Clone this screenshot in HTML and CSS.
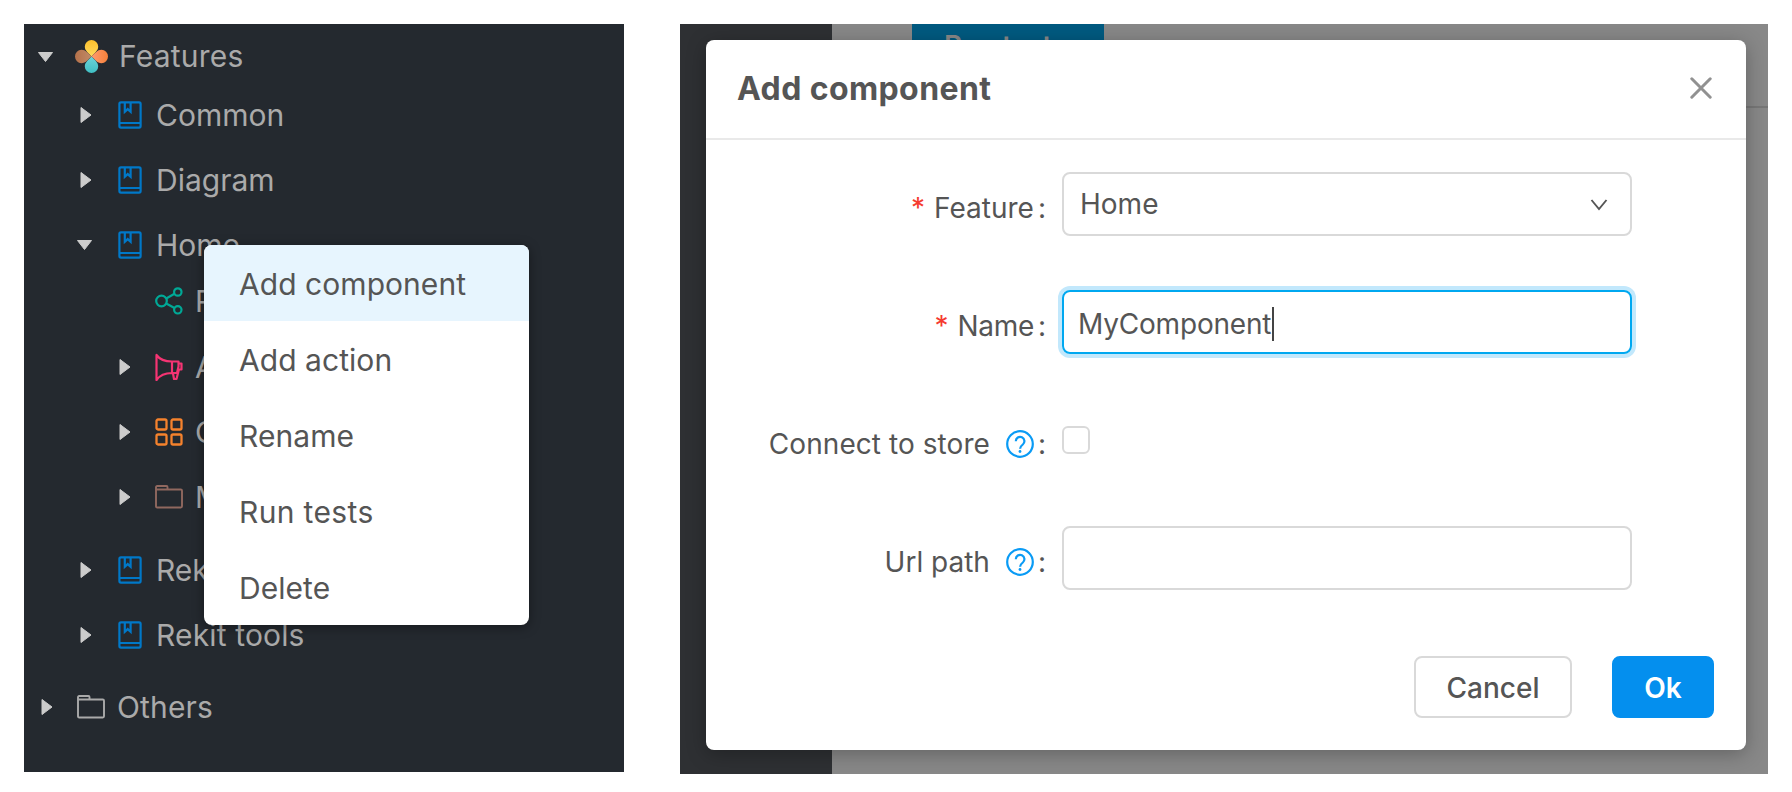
FILE: index.html
```
<!DOCTYPE html>
<html lang="en">
<head>
<meta charset="utf-8">
<title>Add component</title>
<link rel="stylesheet" href="styles.css">
</head>
<body>
<svg class="defs" aria-hidden="true">
  <symbol id="book" viewBox="0 0 24 28">
    <g fill="none" stroke="currentColor" stroke-width="2.2">
      <rect x="1.400" y="1.400" width="21.200" height="25.200" rx="1.500"/>
      <path d="M1.500 22h21M6.800 1.500v9.300l2.900-2.700 2.900 2.700V1.500"/>
    </g>
  </symbol>
  <symbol id="folder" viewBox="0 0 28 24">
    <path d="M1 4.500V2.200Q1 1 2.200 1h9.300q1 0 1 1v2.500M1 4.500h24.700q1.300 0 1.300 1.300v15.500q0 1.200-1.200 1.200H2.200Q1 22.500 1 21.300z" fill="none" stroke="currentColor" stroke-width="1.900"/>
  </symbol>
  <symbol id="right" viewBox="0 0 12 18"><path d="M1 1.500v15L11 9z" fill="#ccc" stroke="#ccc" stroke-linejoin="round"/></symbol>
  <symbol id="down" viewBox="0 0 18 12"><path d="M1.500 1.500h14L8.500 10.500z" fill="#ccc" stroke="#ccc" stroke-linejoin="round"/></symbol>
  <symbol id="help" viewBox="0 0 28 28">
    <g fill="none" stroke="#0a9bf5" stroke-width="2.200">
      <circle cx="14" cy="14" r="12.800"/>
      <path d="M9.800 11.200a4.300 4.300 0 1 1 7 3.300c-1.700 1.300-2.700 2.100-2.700 4.300"/>
    </g>
    <circle cx="14" cy="21.500" r="1.400" fill="#0a9bf5"/>
  </symbol>
</svg>
<main class="page">
  <section class="sidebar">
    <div class="row root"><svg class="down"><use href="#down"/></svg>
      <svg class="logo" viewBox="0 0 32 32">
        <defs>
          <linearGradient id="g1" x1="0" y1="0" x2="0" y2="1"><stop offset="0" stop-color="#fbc02d"/><stop offset="1" stop-color="#ffd95c"/></linearGradient>
          <linearGradient id="g2"><stop offset="0" stop-color="#ff9a6e"/><stop offset="1" stop-color="#f5813a"/></linearGradient>
          <linearGradient id="g3" x1="0" y1="0" x2="0" y2="1"><stop offset="0" stop-color="#6fd3d8"/><stop offset="1" stop-color="#3fbfc4"/></linearGradient>
          <linearGradient id="g4"><stop offset="0" stop-color="#b5714a"/><stop offset="1" stop-color="#c08a68"/></linearGradient>
        </defs>
        <path d="M16 16C13 12.500 9.500 10.500 9.500 6.300a6.500 6.300 0 0 1 13 0c0 4.200-3.500 6.200-6.500 9.700z" fill="url(#g1)"/>
        <path d="M16 16c3.500-3 5.500-6.500 9.700-6.500a6.300 6.500 0 0 1 0 13c-4.200 0-6.200-3.500-9.700-6.500z" fill="url(#g2)"/>
        <path d="M16 16c3 3.500 6.500 5.500 6.500 9.700a6.500 6.300 0 0 1-13 0c0-4.200 3.500-6.200 6.500-9.700z" fill="url(#g3)"/>
        <path d="M16 16c-3.500 3-5.500 6.500-9.700 6.500a6.300 6.500 0 0 1 0-13c4.200 0 6.200 3.500 9.700 6.500z" fill="url(#g4)"/>
      </svg><span class="t features">Features</span></div>
    <div class="row l1"><svg class="right"><use href="#right"/></svg><svg class="book"><use href="#book"/></svg><span class="t">Common</span></div>
    <div class="row l1"><svg class="right"><use href="#right"/></svg><svg class="book"><use href="#book"/></svg><span class="t">Diagram</span></div>
    <div class="row l1 open"><svg class="down"><use href="#down"/></svg><svg class="book"><use href="#book"/></svg><span class="t">Home</span></div>
    <div class="row l2 leaf"><svg class="ico teal" viewBox="0 0 28 28"><g fill="none" stroke="currentColor" stroke-width="2.200"><circle cx="6.500" cy="14" r="5.300"/><circle cx="22.800" cy="5" r="3.700"/><circle cx="22.800" cy="22.800" r="3.700"/><path d="M11.200 11.500l8.300-4.700M11.200 16.500l8.300 4.500"/></g></svg><span class="t">Routes</span></div>
    <div class="row l2"><svg class="right"><use href="#right"/></svg><svg class="ico pink" viewBox="0 0 28 28"><path d="M1.500 2v25C5 22 10.500 20 17 20V8.500C10.500 8.500 5 7 1.500 2zM17 8.500h6.500v5L22 20h-5M23.500 10.500h3v6h-3.200M18 20.500l1 5.500h2.500l2.300-9" fill="none" stroke="currentColor" stroke-width="2.200" stroke-linejoin="round"/></svg><span class="t">Actions</span></div>
    <div class="row l2"><svg class="right"><use href="#right"/></svg><svg class="ico orange" viewBox="0 0 28 28"><g fill="none" stroke="currentColor" stroke-width="2.300"><rect x="1.500" y="1.500" width="10" height="10" rx="1.500"/><rect x="16.500" y="1.500" width="10" height="10" rx="1.500"/><rect x="1.500" y="16.500" width="10" height="10" rx="1.500"/><rect x="16.500" y="16.500" width="10" height="10" rx="1.500"/></g></svg><span class="t">Components</span></div>
    <div class="row l2"><svg class="right"><use href="#right"/></svg><svg class="folder brown"><use href="#folder"/></svg><span class="t">Misc</span></div>
    <div class="row l1 after"><svg class="right"><use href="#right"/></svg><svg class="book"><use href="#book"/></svg><span class="t">Rekit core</span></div>
    <div class="row l1"><svg class="right"><use href="#right"/></svg><svg class="book"><use href="#book"/></svg><span class="t tools">Rekit tools</span></div>
    <div class="row others"><svg class="right"><use href="#right"/></svg><svg class="folder grey"><use href="#folder"/></svg><span class="t tools">Others</span></div>
    <ul class="menu">
      <li class="active"><span>Add component</span></li>
      <li><span>Add action</span></li>
      <li><span>Rename</span></li>
      <li><span class="run">Run tests</span></li>
      <li><span>Delete</span></li>
    </ul>
  </section>
  <section class="stage">
    <div class="strip"></div>
    <div class="behind"><div class="tab">Run tests</div></div>
    <div class="modal">
      <header><h1>Add component</h1>
        <svg class="close" viewBox="0 0 22 22"><path d="M1.800 1.800l18.400 18.400M20.200 1.800L1.800 20.200" stroke="#919191" stroke-width="3" stroke-linecap="round"/></svg></header>
      <form>
        <div class="field"><label><i>*</i><span class="lt">Feature</span><b>:</b></label>
          <div class="input select"><span>Home</span><svg viewBox="0 0 18 12"><path d="M1.500 1l7.500 9 7.500-9" fill="none" stroke="#555" stroke-width="1.900"/></svg></div></div>
        <div class="field"><label><i>*</i><span class="lt name">Name</span><b>:</b></label>
          <div class="input focus"><span>MyComponent</span><em></em></div></div>
        <div class="field"><label><span class="lt connect">Connect to store</span><svg><use href="#help"/></svg><b>:</b></label>
          <div class="check"></div></div>
        <div class="field"><label><span class="lt">Url path</span><svg><use href="#help"/></svg><b>:</b></label>
          <div class="input"></div></div>
      </form>
      <footer><div class="btn">Cancel</div><div class="btn ok">Ok</div></footer>
    </div>
  </section>
</main>
</body>
</html>
```
FILE: styles.css
```
* { box-sizing: border-box; }
body { margin: 0; background: #fff; font-family: Inter, sans-serif; color: #555; }
.defs { position: absolute; width: 0; height: 0; }
svg { display: block; flex: none; }
.page { display: flex; gap: 56px; width: 1792px; height: 792px; padding: 24px; overflow: hidden; }
.sidebar { position: relative; width: 600px; height: 748px; background: #24292f; overflow: hidden; font-size: 30px; color: #aaa; }
.row { display: flex; align-items: center; height: 65px; white-space: nowrap; }
.root { height: 58px; padding: 6px 0 0 13px; }
.root .down { margin-top: 2px; }
.root .logo { width: 33px; height: 33px; margin: 0 11px 0 20px; }
.features { letter-spacing: .2px; }
.l1 { padding-left: 56px; }
.down { width: 18px; height: 12px; }
.right { width: 12px; height: 18px; }
.l1 .book { width: 24px; height: 28px; margin: 0 14px 0 26px; color: #0078c8; }
.l1.open { padding-left: 52px; }
.l1.open .book { margin-left: 24px; }
.l2 { padding-left: 95px; }
.l2 .ico, .l2 .folder { margin: 0 12px 0 24px; }
.l2.leaf { height: 48px; margin-bottom: 9px; }
.l2.leaf .ico { margin-left: 36px; }
.ico { width: 28px; height: 28px; }
.folder { width: 28px; height: 24px; }
.teal { color: #00a896; }
.pink { color: #f53473; }
.orange { color: #f5822d; }
.brown { color: #90685f; }
.grey { color: #aaa; }
.tools { letter-spacing: .15px; }
.l1.after { margin-top: 8px; }
.others { padding-left: 17px; margin-top: 7px; }
.others .folder { margin: 0 12px 0 24px; }
.menu { position: absolute; left: 180px; top: 221px; width: 325px; height: 380px; margin: 0; padding: 0; list-style: none; background: #fff; border-radius: 8px; overflow: hidden; color: #555; box-shadow: 0 2px 12px rgba(0,0,0,.4); }
.menu li { height: 76px; padding: 1px 0 0 35px; display: flex; align-items: center; letter-spacing: .05px; }
.menu .run { letter-spacing: .35px; }
.menu .active { background: #e7f5fe; }
.stage { position: relative; display: flex; width: 1088px; height: 750px; background: #888; overflow: hidden; }
.strip { width: 152px; background: #2e3033; }
.behind { flex: 1; height: 84px; border-bottom: 2px solid #777; padding-left: 80px; }
.tab { width: 192px; height: 60px; padding: 5px 0 0 32px; background: #005a80; color: #888; font-size: 28px; font-weight: 600; line-height: 34px; letter-spacing: -.4px; }
.modal { position: absolute; left: 26px; top: 16px; width: 1040px; height: 710px; background: #fff; border-radius: 8px; box-shadow: 0 4px 20px rgba(0,0,0,.28); }
header { display: flex; justify-content: space-between; align-items: center; height: 100px; padding: 0 34px 2px 31px; border-bottom: 2px solid #e9e9e9; }
h1 { margin: 0; font-size: 32px; font-weight: 700; letter-spacing: .4px; }
.close { width: 22px; height: 22px; }
form { display: flex; flex-direction: column; gap: 54px; padding-top: 32px; font-size: 28px; }
.field { display: flex; height: 64px; }
label { display: flex; justify-content: flex-end; align-items: center; width: 356px; padding: 8px 16px 0 0; white-space: nowrap; }
label i { color: #f53b30; font-style: normal; margin-right: 9px; }
label b { font-weight: 400; margin-left: 4px; }
label svg { width: 28px; height: 28px; margin: -1px 0 0 16px; }
.name { letter-spacing: -.3px; }
.connect { letter-spacing: .06px; }
.input { display: flex; align-items: center; width: 570px; height: 64px; border: 2px solid #d9d9d9; border-radius: 8px; padding: 0 22px 0 16px; }
.select { justify-content: space-between; }
.select svg { width: 18px; height: 12px; margin-top: 1px; }
.focus { border-color: #00a8f0; box-shadow: 0 0 0 4px #c2e8fc; padding: 3px 0 0 14px; letter-spacing: -.2px; }
.focus em { width: 2px; height: 34px; background: #444; margin-left: 1px; }
.check { width: 28px; height: 28px; border: 2px solid #d9d9d9; border-radius: 6px; margin-top: 18px; }
footer { display: flex; justify-content: flex-end; gap: 40px; padding: 66px 32px 0 0; }
.btn { display: flex; align-items: center; justify-content: center; width: 158px; height: 62px; padding-top: 2px; border: 2px solid #d9d9d9; border-radius: 8px; font-size: 28px; font-weight: 500; }
.ok { width: 102px; background: #048fee; border-color: #048fee; color: #fff; font-weight: 600; }
```
